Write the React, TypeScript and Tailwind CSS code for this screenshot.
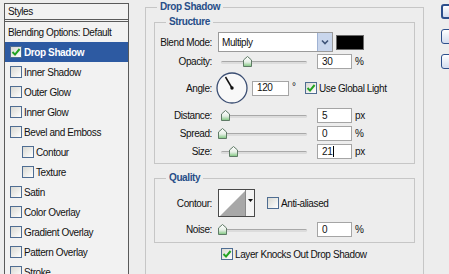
import React from "react";

function Check({ checked = false, className = "" }: { checked?: boolean; className?: string }) {
  return (
    <span
      className={`inline-flex items-center justify-center shrink-0 w-[12px] h-[12px] border border-[#4f6d92] bg-linear-to-br from-[#d9d9d3] to-white ${className}`}
    >
      {checked && (
        <svg width="10" height="10" viewBox="0 0 10 10">
          <path d="M1.5 5 L4 7.6 L8.6 2" fill="none" stroke="#22a322" strokeWidth="2" />
        </svg>
      )}
    </span>
  );
}

function Thumb() {
  return (
    <svg width="9" height="11" viewBox="0 0 9 11">
      <defs>
        <linearGradient id="tg" x1="0" y1="0" x2="0" y2="1">
          <stop offset="0" stopColor="#ffffff" />
          <stop offset="0.55" stopColor="#e6efe6" />
          <stop offset="1" stopColor="#7cc67c" />
        </linearGradient>
      </defs>
      <polygon points="0.5,4 4.5,0.5 8.5,4 8.5,10.5 0.5,10.5" fill="url(#tg)" stroke="#5f7a66" strokeWidth="1" />
    </svg>
  );
}

function Slider({ pos }: { pos: number }) {
  return (
    <div className="relative w-[89px] h-[12px] shrink-0">
      <div className="absolute left-[3px] right-0 top-[5px] h-[3px] rounded-full bg-[#dcdcdc] border-t border-[#a8a8a8]" />
      <div className="absolute top-0" style={{ left: pos }}>
        <Thumb />
      </div>
    </div>
  );
}

function Field({ value, caret = false, w = "w-[35px]" }: { value: string; caret?: boolean; w?: string }) {
  return (
    <div className={`${w} h-[15px] shrink-0 bg-white border border-[#a5a5a5] flex items-center pl-[4px] leading-none`}>
      <span>{value}</span>
      {caret && <span className="w-[1px] h-[11px] bg-black ml-[1px]" />}
    </div>
  );
}

function Label({ children }: { children: React.ReactNode }) {
  return <div className="w-[57px] shrink-0 text-right whitespace-nowrap">{children}</div>;
}

function SliderRow({ label, pos, value, unit, caret = false, mt }: { label: string; pos: number; value: string; unit: string; caret?: boolean; mt: string }) {
  return (
    <div className={`flex items-center h-[15px] ${mt}`}>
      <Label>{label}</Label>
      <div className="ml-[6px]">
        <Slider pos={pos} />
      </div>
      <div className="ml-[10px]">
        <Field value={value} caret={caret} />
      </div>
      <span className="ml-[3px]">{unit}</span>
    </div>
  );
}

const styleRows: { label: string; indent?: boolean; checked?: boolean; selected?: boolean }[] = [
  { label: "Drop Shadow", checked: true, selected: true },
  { label: "Inner Shadow" },
  { label: "Outer Glow" },
  { label: "Inner Glow" },
  { label: "Bevel and Emboss" },
  { label: "Contour", indent: true },
  { label: "Texture", indent: true },
  { label: "Satin" },
  { label: "Color Overlay" },
  { label: "Gradient Overlay" },
  { label: "Pattern Overlay" },
  { label: "Stroke" },
];

export default function App() {
  return (
    <div className="w-[449px] h-[274px] overflow-hidden bg-[#ededed] flex items-start text-[10px] tracking-[-0.4px] text-[#111] font-['Liberation_Sans',Arial,sans-serif] leading-[13px]">
      {/* Left styles list */}
      <div className="ml-[4px] mt-[3px] w-[125px] h-[300px] shrink-0 border border-[#5a5a5a] bg-[#f2f2f2] flex flex-col whitespace-nowrap">
        <div className="h-[18px] flex items-center pl-[3px] border-b-[3px] border-double border-[#5a5a5a]">Styles</div>
        <div className="h-[20px] flex items-center pl-[3px]">Blending Options: Default</div>
        {styleRows.map((r) => (
          <div
            key={r.label}
            className={`h-[20px] flex items-center gap-[2px] ${r.indent ? "pl-[17px]" : "pl-[5px]"} ${
              r.selected ? "bg-[#2d5aa2] text-white font-bold" : ""
            }`}
          >
            <Check checked={r.checked} />
            <span>{r.label}</span>
          </div>
        ))}
      </div>

      {/* Drop Shadow group */}
      <fieldset className="ml-[16px] w-[279px] h-[300px] shrink-0 border border-[#c6c6c6] px-[8px] whitespace-nowrap">
        <legend className="ml-[3px] px-[3px] leading-[14px] font-bold text-[#274e88]">Drop Shadow</legend>

        {/* Structure */}
        <fieldset className="mt-[1px] w-[261px] border border-[#c6c6c6] pb-[4px]">
          <legend className="ml-[11px] px-[3px] leading-[14px] font-bold text-[#274e88]">Structure</legend>

          <div className="flex items-center h-[20px] mt-[3px]">
            <Label>Blend Mode:</Label>
            <div className="ml-[6px] w-[115px] h-[20px] bg-white border border-[#9a9a9a] flex items-center">
              <span className="flex-1 pl-[3px]">Multiply</span>
              <div className="w-[15px] h-[18px] bg-[#c9d6ec] border-l border-[#9fb2d3] flex items-center justify-center">
                <svg width="8" height="6" viewBox="0 0 8 6">
                  <path d="M1 1.5 L4 4.5 L7 1.5" fill="none" stroke="#3f5478" strokeWidth="1.6" />
                </svg>
              </div>
            </div>
            <div className="ml-[3px] w-[28px] h-[15px] bg-black border border-[#6a6a6a]" />
          </div>

          <SliderRow label="Opacity:" pos={25} value="30" unit="%" mt="mt-[2px]" />

          <div className="flex items-center h-[32px] mt-[3px]">
            <Label>Angle:</Label>
            <svg className="ml-[4px] shrink-0" width="32" height="32" viewBox="0 0 32 32">
              <circle cx="16" cy="16" r="15" fill="#f8f8f8" stroke="#3a4d72" strokeWidth="1.3" />
              <line x1="16" y1="16" x2="9.5" y2="5" stroke="#111" strokeWidth="1.5" />
              <circle cx="16" cy="16" r="1.7" fill="#111" />
            </svg>
            <div className="ml-[4px]">
              <Field value="120" w="w-[37px]" />
            </div>
            <span className="w-[16px] pl-[3px] self-start mt-[8px]">°</span>
            <Check checked />
            <span className="ml-[2px]">Use Global Light</span>
          </div>

          <SliderRow label="Distance:" pos={3} value="5" unit="px" mt="mt-[4px]" />
          <SliderRow label="Spread:" pos={0} value="0" unit="%" mt="mt-[3px]" />
          <SliderRow label="Size:" pos={11} value="21" unit="px" caret mt="mt-[3px]" />
        </fieldset>

        {/* Quality */}
        <fieldset className="mt-[7px] w-[261px] border border-[#c6c6c6] pb-[5px]">
          <legend className="ml-[11px] px-[3px] leading-[14px] font-bold text-[#274e88]">Quality</legend>

          <div className="flex items-center h-[28px] mt-[4px]">
            <Label>Contour:</Label>
            <div className="ml-[6px] w-[37px] h-[28px] shrink-0 flex border border-[#4a4a4a] bg-white">
              <svg width="26" height="26" viewBox="0 0 26 26">
                <polygon points="1,26 26,1 26,26" fill="#a8a8a8" />
              </svg>
              <div className="flex-1 border-l border-[#8a8a8a] bg-[#f4f4f4] flex justify-center pt-[9px]">
                <svg width="5" height="3" viewBox="0 0 5 3">
                  <polygon points="0,0 5,0 2.5,3" fill="#111" />
                </svg>
              </div>
            </div>
            <Check className="ml-[12px]" />
            <span className="ml-[2px]">Anti-aliased</span>
          </div>

          <SliderRow label="Noise:" pos={0} value="0" unit="%" mt="mt-[5px]" />
        </fieldset>

        <div className="mt-[5px] ml-[67px] flex items-center h-[12px]">
          <Check checked />
          <span className="ml-[2px]">Layer Knocks Out Drop Shadow</span>
        </div>
      </fieldset>

      {/* Right buttons (cut off) */}
      <div className="ml-[17px] mt-[4px] flex flex-col gap-[10px] shrink-0">
        <div className="w-[20px] h-[15px] rounded-[3px] border-2 border-[#2d4f8c] bg-linear-to-b from-white to-[#d3dcee]" />
        <div className="w-[20px] h-[15px] rounded-[3px] border border-[#2d4f8c] bg-linear-to-b from-white to-[#d3dcee]" />
        <div className="w-[20px] h-[15px] rounded-[3px] border border-[#2d4f8c] bg-linear-to-b from-white to-[#d3dcee]" />
      </div>
    </div>
  );
}
